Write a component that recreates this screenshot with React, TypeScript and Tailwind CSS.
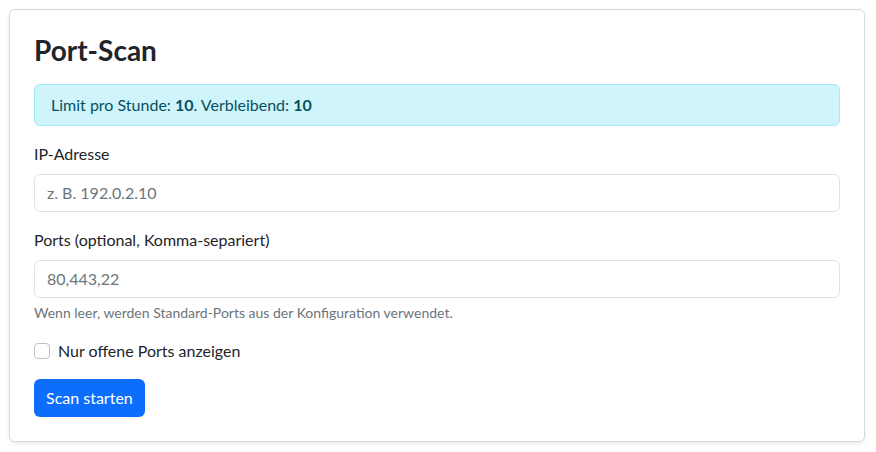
import React from 'react';

const App: React.FC = () => {
  return (
    <div
      className="min-h-screen bg-white pl-[9px] pr-[11px] pt-[9px] text-[#212529]"
      style={{ fontFamily: 'Lato, "Noto Sans", sans-serif' }}
    >
      <div className="rounded-md border border-[#d9d9d9] bg-white p-6 shadow-[0_2px_4px_rgba(0,0,0,0.075)]">
        <h3 className="mb-4 text-[28px] font-bold leading-[1.2]">Port-Scan</h3>

        <div className="mb-4 rounded-md border border-[#9eeaf9] bg-[#cff4fc] px-4 py-2 text-base leading-6 text-[#055160]">
          Limit pro Stunde: <strong>10</strong>. Verbleibend: <strong>10</strong>
        </div>

        <form onSubmit={(e) => e.preventDefault()}>
          <div className="mb-4">
            <label className="mb-2 block text-base leading-6">IP-Adresse</label>
            <input
              type="text"
              placeholder="z. B. 192.0.2.10"
              className="block h-[38px] w-full rounded-md border border-[#dee2e6] px-3 py-1.5 text-base leading-6 placeholder:text-[#6c757d] focus:outline-none"
            />
          </div>

          <div className="mb-4">
            <label className="mb-2 block text-base leading-6">Ports (optional, Komma-separiert)</label>
            <input
              type="text"
              placeholder="80,443,22"
              className="block h-[38px] w-full rounded-md border border-[#dee2e6] px-3 py-1.5 text-base leading-6 placeholder:text-[#6c757d] focus:outline-none"
            />
            <div className="mt-1 text-sm leading-[21px] text-[#6c757d]">
              Wenn leer, werden Standard-Ports aus der Konfiguration verwendet.
            </div>
          </div>

          <div className="mb-4 flex h-6 items-center gap-2">
            <input
              type="checkbox"
              id="open-only"
              className="h-4 w-4 appearance-none rounded border border-[#bfbfbf] bg-white"
            />
            <label htmlFor="open-only" className="text-base leading-6">
              Nur offene Ports anzeigen
            </label>
          </div>

          <button
            type="submit"
            className="h-[38px] rounded-md bg-[#0d6efd] px-3 text-base leading-6 text-white"
          >
            Scan starten
          </button>
        </form>
      </div>
    </div>
  );
};

export default App;
